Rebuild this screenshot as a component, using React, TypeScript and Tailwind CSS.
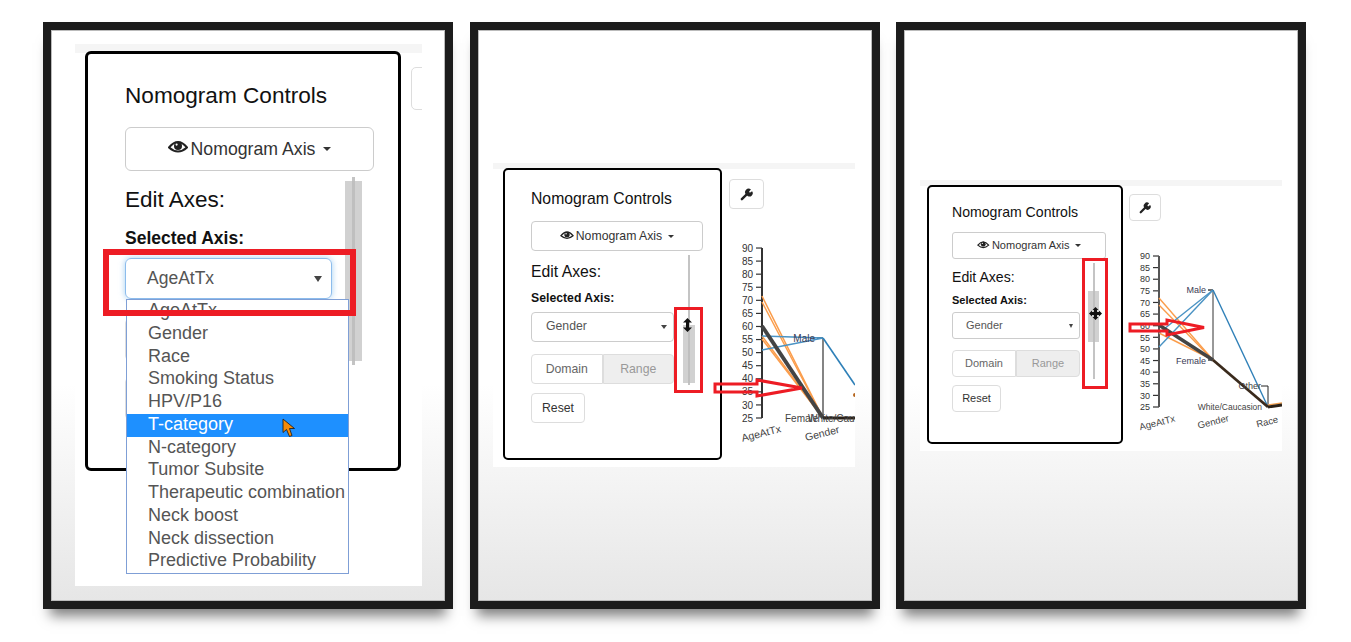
import type { ReactNode } from "react";

const OPTIONS = [
  "AgeAtTx",
  "Gender",
  "Race",
  "Smoking Status",
  "HPV/P16",
  "T-category",
  "N-category",
  "Tumor Subsite",
  "Therapeutic combination",
  "Neck boost",
  "Neck dissection",
  "Predictive Probability",
];

const LARGE = {
  panel: "h-[420px] w-[316px] rounded-md border-[3px] pl-[37px] pt-[29px]",
  title: "text-[22.6px] leading-[26px]",
  button: "mt-[18px] h-[44px] w-[249px] rounded-md text-[17.7px] gap-[3px]",
  caret: "border-x-[4.5px] border-t-[4.5px] ml-[5px]",
  eye: "h-[15px] w-[20px] mb-[5px]",
  row: "mt-[6px] gap-[13px]",
  column: "w-[207px]",
  edit: "mt-[10px] text-[22.5px] leading-[26px]",
  selected: "mt-[15px] text-[17.5px] leading-[20px]",
  select: "mt-[10px] h-[41px] pl-[21px] pr-[9px] text-[17.5px] rounded-md",
  tabs: "mt-[20px] h-[41px] text-[17.5px]",
  reset: "mt-[18px] h-[41px] w-[78px] text-[17.5px]",
  slider: "h-[188px] w-[17px]",
  line: "w-[3px]",
  thumb: "top-[4px] h-[180px]",
  arrow: "border-x-[4px] border-t-[6px]",
};

const MEDIUM = {
  panel: "h-[292px] w-[219px] rounded-[5px] border-2 pl-[26px] pt-[20px]",
  title: "text-[15.75px] leading-[18px]",
  button: "mt-[13px] h-[30px] w-[172px] rounded-[4px] text-[12.25px] gap-[2px]",
  caret: "border-x-[3.5px] border-t-[3.5px] ml-[4px]",
  eye: "h-[10px] w-[14px] mb-[3px]",
  row: "mt-[4px] gap-[9px]",
  column: "w-[143px]",
  edit: "mt-[8px] text-[15.75px] leading-[18px]",
  selected: "mt-[10px] text-[12.25px] leading-[14px]",
  select: "mt-[7px] h-[30px] pl-[14px] pr-[6px] pb-[1px] text-[12.25px] rounded-[4px]",
  tabs: "mt-[12px] h-[30px] text-[12.25px]",
  reset: "mt-[9px] h-[30px] w-[54px] text-[12.25px]",
  slider: "h-[130px] w-[12px]",
  line: "w-[2px]",
  thumb: "top-[70px] h-[58px]",
  arrow: "border-x-[3px] border-t-[4px]",
};

const SMALL = {
  panel: "h-[259px] w-[196px] rounded-[5px] border-2 pl-[23px] pt-[17px]",
  title: "text-[14.1px] leading-[16px]",
  button: "mt-[12px] h-[27px] w-[154px] rounded-[3px] text-[11px] gap-[2px]",
  caret: "border-x-[3px] border-t-[3px] ml-[3px]",
  eye: "h-[9px] w-[12.5px] mb-[3px]",
  row: "mt-[4px] gap-[8px]",
  column: "w-[128px]",
  edit: "mt-[6px] text-[14.1px] leading-[16px]",
  selected: "mt-[9px] text-[11px] leading-[13px]",
  select: "mt-[5px] h-[27px] pl-[13px] pr-[6px] text-[11px] rounded-[3px]",
  tabs: "mt-[11px] h-[27px] text-[11px]",
  reset: "mt-[8px] h-[27px] w-[49px] text-[11px]",
  slider: "h-[116px] w-[11px]",
  line: "w-[2px]",
  thumb: "top-[28px] h-[51px]",
  arrow: "border-x-[2.5px] border-t-[4px]",
};

type Sizes = typeof LARGE;

function EyeIcon({ className }: { className: string }) {
  return (
    <svg className={className} viewBox="0 0 20 15">
      <path d="M1 8.5 Q10 -2.5 19 8.5 Q10 16.5 1 8.5 Z" fill="none" stroke="#222" strokeWidth="2" />
      <circle cx="10" cy="7" r="4" fill="#222" />
      <circle cx="8.6" cy="5.6" r="1.1" fill="#fff" />
    </svg>
  );
}

function WrenchIcon({ size }: { size: number }) {
  return (
    <svg width={size} height={size} viewBox="0 0 14 14">
      <line x1="2" y1="12" x2="7.5" y2="6.5" stroke="#222" strokeWidth="2.6" strokeLinecap="round" />
      <path d="M6.8 7.2 A3.6 3.6 0 0 1 11.8 1.6 L9.8 3.8 L10.6 5.2 L13 3.4 A3.6 3.6 0 0 1 8.2 8.6 Z" fill="#222" />
    </svg>
  );
}

function Controls({ s, value, list }: { s: Sizes; value: string; list?: ReactNode }) {
  return (
    <div className={`relative shrink-0 border-black bg-white ${s.panel}`}>
      <h4 className={`text-[#111] ${s.title}`}>Nomogram Controls</h4>
      <div className={`flex items-center justify-center border border-[#ccc] bg-white text-[#333] ${s.button}`}>
        <EyeIcon className={s.eye} />
        <span>Nomogram Axis</span>
        <span className={`border-x-transparent border-t-[#333] ${s.caret}`} />
      </div>
      <div className={`flex ${s.row}`}>
        <div className={`shrink-0 ${s.column}`}>
          <h4 className={`text-[#111] ${s.edit}`}>Edit Axes:</h4>
          <div className={`font-bold text-[#111] ${s.selected}`}>Selected Axis:</div>
          <div className="relative">
            <div
              className={`flex items-center justify-between border text-[#555] ${s.select} ${
                list ? "border-[#8cbcec] shadow-[0_0_6px_rgba(102,175,233,0.6)]" : "border-[#ccc]"
              }`}
            >
              <span>{value}</span>
              <span className={`border-x-transparent border-t-[#444] ${s.arrow}`} />
            </div>
            {list}
          </div>
          {/* with the list open these sit behind it, only their left edge shows */}
          <div className={`flex text-center ${s.tabs}`}>
            <div className="flex flex-1 items-center justify-center rounded-l-[4px] border border-[#ddd] text-[#666]">{list ? null : "Domain"}</div>
            <div className="flex flex-1 items-center justify-center rounded-r-[4px] border border-[#ddd] bg-[#eee] text-[#999]">{list ? null : "Range"}</div>
          </div>
          <div className={`flex items-center justify-center rounded-[4px] border border-[#ddd] text-[#333] ${s.reset}`}>{list ? null : "Reset"}</div>
        </div>
        <div className={`relative flex shrink-0 justify-center ${s.slider}`}>
          <div className={`h-full bg-[#c4c4c4] ${s.line}`} />
          <div className={`absolute inset-x-0 bg-[#bdbdbd]/70 ${s.thumb}`} />
        </div>
      </div>
    </div>
  );
}

function OptionList() {
  return (
    <div className="absolute left-[1px] top-full z-10 w-[223px] border border-[#7f9fd6] bg-white text-[18px] text-[#555]">
      {OPTIONS.map((o) => (
        <div
          key={o}
          className={`whitespace-nowrap pb-[2px] pl-[21px] leading-[20.75px] ${o === "T-category" ? "bg-[#1e90ff] text-white" : ""}`}
        >
          {o}
        </div>
      ))}
    </div>
  );
}

function Frame({ children, className }: { children: ReactNode; className: string }) {
  return (
    <div className="h-[587px] w-[410px] shrink-0 border-8 border-[#1c1c1c] bg-linear-to-b from-white from-[62%] to-[#e6e6e6] shadow-[0_14px_12px_-7px_rgba(0,0,0,0.5)] ring-1 ring-inset ring-[#bbb]">
      <div className={`relative overflow-hidden bg-white ${className}`}>{children}</div>
    </div>
  );
}

function ticks(x: number, y0: number, k: number, size: number) {
  const out = [];
  for (let v = 25; v <= 90; v += 5) {
    const y = y0 - (v - 25) * k;
    out.push(
      <g key={v}>
        <line x1={x - 6} x2={x} y1={y} y2={y} stroke="#333" strokeWidth="1.2" />
        <text x={x - 9} y={y + size * 0.36} textAnchor="end" fontSize={size} fill="#333">
          {v}
        </text>
      </g>
    );
  }
  return out;
}

function ChartMiddle() {
  return (
    <svg className="mt-[21px] block font-['Liberation_Sans',sans-serif]" width="126" height="220" viewBox="0 0 126 220">
      {ticks(33, 188, 2.615, 10)}
      <line x1="33" x2="33" y1="18" y2="188" stroke="#333" strokeWidth="2" />
      <line x1="94" x2="94" y1="108" y2="188" stroke="#333" strokeWidth="1.2" />
      <line x1="88" x2="94" y1="108" y2="108" stroke="#111" strokeWidth="1.5" />
      <g fill="none" strokeWidth="1.5" stroke="#fb9d4b">
        <line x1="33" y1="66" x2="94" y2="188" />
        <line x1="33" y1="72" x2="94" y2="188" />
        <line x1="33" y1="106" x2="94" y2="188" />
        <line x1="33" y1="109" x2="94" y2="188" />
      </g>
      <g fill="none" strokeWidth="1.6" stroke="#4a93c4">
        <line x1="33" y1="106" x2="94" y2="108" />
        <line x1="33" y1="120" x2="94" y2="108" />
        <line x1="94" y1="108" x2="126" y2="155" stroke="#2f80b8" />
      </g>
      <line x1="33" y1="96" x2="94" y2="188" stroke="#444" strokeWidth="4" />
      <line x1="94" y1="188" x2="126" y2="188" stroke="#2a2118" strokeWidth="3" />
      <circle cx="126" cy="165" r="2" fill="#b5651d" />
      <text x="86" y="112" textAnchor="end" fontSize="10" fill="#3b3b55">Male</text>
      <text x="56" y="192" fontSize="10" fill="#444">Female</text>
      <text x="79" y="192" fontSize="10" fill="#444">White/Caucasion</text>
      <text x="32" y="207" textAnchor="middle" fontSize="10.5" fill="#444" transform="rotate(-14 32 203)">AgeAtTx</text>
      <text x="93" y="207" textAnchor="middle" fontSize="10.5" fill="#444" transform="rotate(-14 93 203)">Gender</text>
    </svg>
  );
}

function ChartRight() {
  return (
    <svg className="mt-[19px] block font-['Liberation_Sans',sans-serif]" width="153" height="200" viewBox="0 0 153 200">
      {ticks(30, 167, 2.323, 9)}
      <line x1="30" x2="30" y1="16" y2="167" stroke="#555" strokeWidth="2" />
      <line x1="84" x2="84" y1="50" y2="120" stroke="#333" strokeWidth="1" />
      <line x1="79" x2="84" y1="50" y2="50" stroke="#111" strokeWidth="1.2" />
      <line x1="79" x2="84" y1="120" y2="120" stroke="#111" strokeWidth="1.2" />
      <path d="M132 146 H139 V167" fill="none" stroke="#222" strokeWidth="1" />
      <g fill="none" strokeWidth="1.4" stroke="#fb9d4b">
        <line x1="30" y1="58" x2="84" y2="120" />
        <line x1="30" y1="65" x2="84" y2="120" />
        <line x1="30" y1="93" x2="84" y2="120" />
      </g>
      <g fill="none" strokeWidth="1.4" stroke="#4a93c4">
        <line x1="30" y1="107" x2="84" y2="50" />
        <line x1="30" y1="93" x2="84" y2="50" />
        <line x1="84" y1="50" x2="139" y2="167" stroke="#2f80b8" />
      </g>
      <line x1="30" y1="85" x2="84" y2="120" stroke="#444" strokeWidth="3.5" />
      <line x1="84" y1="120" x2="139" y2="167" stroke="#3a2a1c" strokeWidth="2.8" />
      <line x1="139" y1="165" x2="153" y2="163" stroke="#f0a050" strokeWidth="1.5" />
      <line x1="139" y1="167" x2="153" y2="165" stroke="#2a2118" strokeWidth="2.8" />
      <text x="77" y="53" textAnchor="end" fontSize="9" fill="#3b3b55">Male</text>
      <text x="77" y="124" textAnchor="end" fontSize="9" fill="#3b3b55">Female</text>
      <text x="132" y="149" textAnchor="end" fontSize="9" fill="#444">Other</text>
      <text x="133" y="170" textAnchor="end" fontSize="8.5" fill="#444">White/Caucasion</text>
      <text x="28" y="186" textAnchor="middle" fontSize="9.5" fill="#444" transform="rotate(-14 28 182)">AgeAtTx</text>
      <text x="84" y="185" textAnchor="middle" fontSize="9.5" fill="#444" transform="rotate(-14 84 181)">Gender</text>
      <text x="138" y="185" textAnchor="middle" fontSize="9.5" fill="#444" transform="rotate(-14 138 181)">Race</text>
    </svg>
  );
}

export default function App() {
  return (
    <div className="flex h-[642px] w-[1351px] items-start overflow-hidden bg-white pl-[43px] pt-[22px] font-['Liberation_Sans',Arial,sans-serif]">
      <Frame className="ml-[24px] mt-[14px] h-[542px] w-[347px]">
        <div className="h-[9px] bg-[#f5f5f5]" />
        <div className="relative -mt-[2px] flex items-start">
          <div className="ml-[10px]">
            <Controls s={LARGE} value="AgeAtTx" list={<OptionList />} />
          </div>
          <div className="ml-[10px] mt-[16px] h-[43px] w-[40px] shrink-0 rounded-l-[5px] border border-[#ddd]" />
        </div>
        <div className="absolute left-[28px] top-[205px] z-20 h-[67px] w-[253px] border-[6px] border-[#ed1c24]" />
        <svg className="absolute left-[207px] top-[374px] z-20" width="14" height="20" viewBox="0 0 14 20">
          <path d="M1 1 L1 14.5 L4.5 11.5 L7.5 18.5 L10 17.5 L7.5 10.5 L12.5 10.5 Z" fill="#f58a07" stroke="#222" strokeWidth="0.9" />
        </svg>
      </Frame>

      <div className="ml-[17px]">
        <Frame className="ml-[15px] mt-[133px] h-[304px] w-[362px]">
          <div className="h-[6px] bg-[#f5f5f5]" />
          <div className="relative -mt-[1px] flex items-start">
            <div className="ml-[10px]">
              <Controls s={MEDIUM} value="Gender" />
            </div>
            <div className="ml-[7px] mt-[11px] w-[126px] shrink-0">
              <div className="flex h-[30px] w-[35px] items-center justify-center rounded-[4px] border border-[#ddd] bg-white">
                <WrenchIcon size={13} />
              </div>
              <ChartMiddle />
            </div>
          </div>
          <div className="absolute left-[181px] top-[144px] h-[86px] w-[29px] border-[3px] border-[#ed1c24]" />
          <svg className="absolute left-[190px] top-[155px]" width="9" height="14" viewBox="0 0 9 14">
            <path d="M4.5 0 L9 4.5 H6 V9.5 H9 L4.5 14 L0 9.5 H3 V4.5 H0 Z" fill="#111" />
          </svg>
          <svg className="absolute left-[219px] top-[214px]" width="92" height="22" viewBox="0 0 92 22">
            <path d="M3 7 H45 V3 L90 11 L45 19 V15 H3 Z" fill="none" stroke="#ed1c24" strokeWidth="3" />
          </svg>
        </Frame>
      </div>

      <div className="ml-[16px]">
        <Frame className="ml-[16px] mt-[150px] h-[271px] w-[362px]">
          <div className="h-[6px] bg-[#f5f5f5]" />
          <div className="relative -mt-[1px] flex items-start">
            <div className="ml-[7px]">
              <Controls s={SMALL} value="Gender" />
            </div>
            <div className="ml-[6px] mt-[9px] w-[153px] shrink-0">
              <div className="flex h-[27px] w-[32px] items-center justify-center rounded-[4px] border border-[#ddd] bg-white">
                <WrenchIcon size={12} />
              </div>
              <ChartRight />
            </div>
          </div>
          <div className="absolute left-[162px] top-[78px] h-[131px] w-[26px] border-[3px] border-[#ed1c24]" />
          <svg className="absolute left-[169px] top-[127px]" width="13" height="13" viewBox="0 0 13 13">
            <path d="M6.5 0 L9.5 3 H8 V5 H10 V3.5 L13 6.5 L10 9.5 V8 H8 V10 H9.5 L6.5 13 L3.5 10 H5 V8 H3 V9.5 L0 6.5 L3 3.5 V5 H5 V3 H3.5 Z" fill="#111" />
          </svg>
          <svg className="absolute left-[208px] top-[138px]" width="78" height="20" viewBox="0 0 78 20">
            <path d="M2 6 H39 V2 L76 9.5 L39 17 V13 H2 Z" fill="none" stroke="#ed1c24" strokeWidth="3" />
          </svg>
        </Frame>
      </div>
    </div>
  );
}
